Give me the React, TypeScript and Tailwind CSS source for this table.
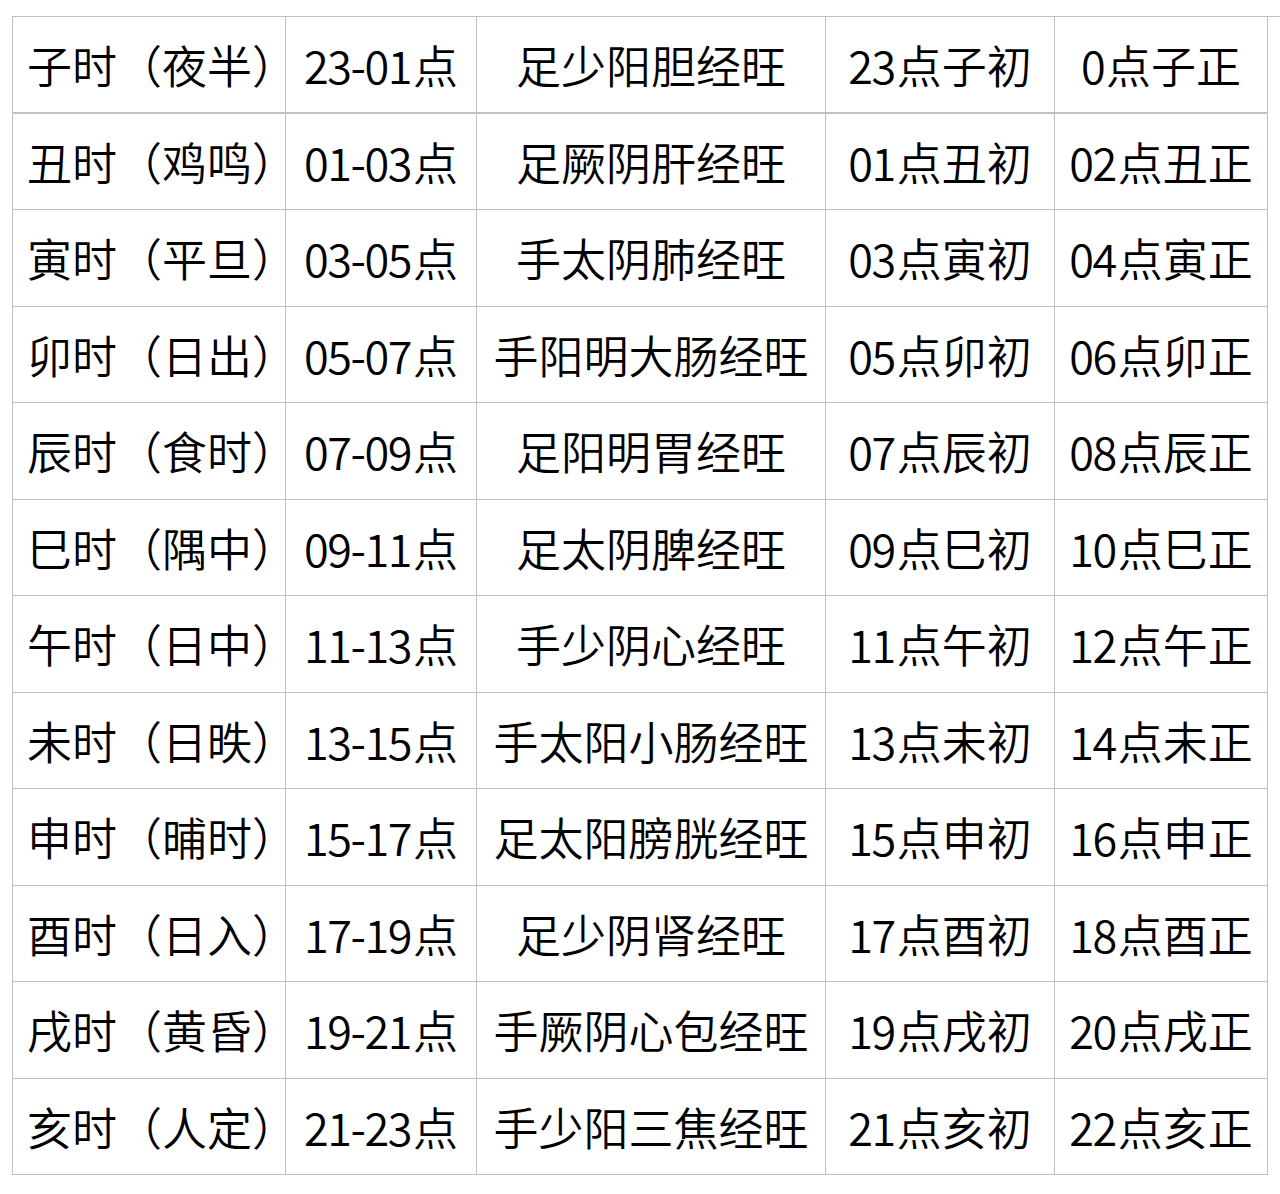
import React from "react";

type Row = [string, string, string, string, string];

const rows: Row[] = [
  ["子时（夜半）", "23-01点", "足少阳胆经旺", "23点子初", "0点子正"],
  ["丑时（鸡鸣）", "01-03点", "足厥阴肝经旺", "01点丑初", "02点丑正"],
  ["寅时（平旦）", "03-05点", "手太阴肺经旺", "03点寅初", "04点寅正"],
  ["卯时（日出）", "05-07点", "手阳明大肠经旺", "05点卯初", "06点卯正"],
  ["辰时（食时）", "07-09点", "足阳明胃经旺", "07点辰初", "08点辰正"],
  ["巳时（隅中）", "09-11点", "足太阴脾经旺", "09点巳初", "10点巳正"],
  ["午时（日中）", "11-13点", "手少阴心经旺", "11点午初", "12点午正"],
  ["未时（日昳）", "13-15点", "手太阳小肠经旺", "13点未初", "14点未正"],
  ["申时（晡时）", "15-17点", "足太阳膀胱经旺", "15点申初", "16点申正"],
  ["酉时（日入）", "17-19点", "足少阴肾经旺", "17点酉初", "18点酉正"],
  ["戌时（黄昏）", "19-21点", "手厥阴心包经旺", "19点戌初", "20点戌正"],
  ["亥时（人定）", "21-23点", "手少阳三焦经旺", "21点亥初", "22点亥正"],
];

// digits a bit tighter so they read like the narrow latin face in the picture
const Txt: React.FC<{ text: string }> = ({ text }) => {
  const parts = text.split(/([0-9-]+)/).filter(Boolean);
  return (
    <>
      {parts.map((p, i) =>
        /^[0-9-]+$/.test(p) ? (
          <span key={i} className="tracking-[-1.5px] pr-[2px]">
            {p}
          </span>
        ) : (
          <span key={i}>{p}</span>
        )
      )}
    </>
  );
};

export default function App() {
  return (
    <div className="w-[1280px] h-[1194px] bg-white pt-4 pl-3">
      <div
        className="grid grid-cols-[273px_191px_349px_229px_213px] border-l border-t border-[#c0c0c0] text-black text-[45px] font-[350] leading-none"
        style={{ fontFamily: '"Noto Sans CJK SC", "Noto Sans", sans-serif' }}
      >
        {rows.map((r, ri) => (
          <React.Fragment key={ri}>
            {r.map((c, ci) => (
              <div
                key={ci}
                className={
                  "h-[96.5px] flex items-center whitespace-nowrap border-r border-[#c0c0c0] " +
                  (ri === 0 ? "border-b-2 " : "border-b ") +
                  (ci === 0 ? "justify-start pl-[14px] overflow-visible" : "justify-center")
                }
              >
                <Txt text={c} />
              </div>
            ))}
          </React.Fragment>
        ))}
      </div>
    </div>
  );
}
